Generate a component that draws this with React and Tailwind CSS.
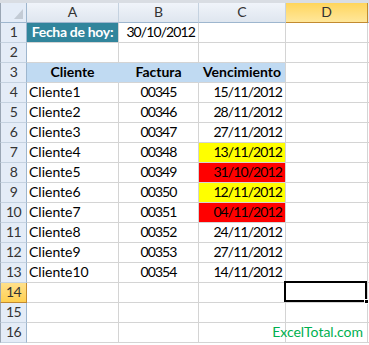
import React from 'react';

const rows = [
  { n: 4, a: 'Cliente1', b: '00345', c: '15/11/2012' },
  { n: 5, a: 'Cliente2', b: '00346', c: '28/11/2012' },
  { n: 6, a: 'Cliente3', b: '00347', c: '27/11/2012' },
  { n: 7, a: 'Cliente4', b: '00348', c: '13/11/2012', fill: 'bg-[#ffff00]' },
  { n: 8, a: 'Cliente5', b: '00349', c: '31/10/2012', fill: 'bg-[#ff0000]' },
  { n: 9, a: 'Cliente6', b: '00350', c: '12/11/2012', fill: 'bg-[#ffff00]' },
  { n: 10, a: 'Cliente7', b: '00351', c: '04/11/2012', fill: 'bg-[#ff0000]' },
  { n: 11, a: 'Cliente8', b: '00352', c: '24/11/2012' },
  { n: 12, a: 'Cliente9', b: '00353', c: '27/11/2012' },
  { n: 13, a: 'Cliente10', b: '00354', c: '14/11/2012' },
];

const cell = 'h-5 border-r border-b border-[#d4d4d4] flex items-end pb-[1px] leading-[18px] whitespace-nowrap';
const num = 'tracking-[-0.9px]';

function RowHead({ n, active }) {
  return (
    <div
      className={`h-5 flex items-end justify-center pb-[1px] leading-[18px] border-r border-b border-l tracking-[-0.5px] ${
        active
          ? 'bg-gradient-to-b from-[#ffe08a] to-[#ffd04f] border-r-[#c28a30] border-b-[#c28a30] border-l-[#9aa6b4] text-[#333]'
          : 'bg-[#e4ecf7] border-r-[#9eb6ce] border-b-[#c5d2e0] border-l-[#9aa6b4] text-[#333]'
      }`}
    >
      {n}
    </div>
  );
}

function ColHead({ label, active }) {
  return (
    <div
      className={`h-5 flex items-end justify-center pb-[1px] leading-[18px] border-r border-b ${
        active
          ? 'bg-gradient-to-b from-[#ffd55a] to-[#ffe79a] border-[#c28a30] text-[#333]'
          : 'bg-gradient-to-b from-[#f0f4fa] to-[#dfe6ef] border-r-[#c5d2e0] border-b-[#9eb6ce] text-[#333]'
      }`}
    >
      {label}
    </div>
  );
}

export default function App() {
  return (
    <div className="w-[369px] h-[345px] bg-white overflow-hidden text-[14px] text-black" style={{ fontFamily: 'Lato, "Liberation Sans", sans-serif' }}>
      <div className="h-[3px] bg-[#d9dde3]" />
      <div className="grid grid-cols-[27px_92px_80px_87px_82px_1fr]">
        {/* column headers */}
        <div className="h-5 bg-[#e4ecf7] border-r border-b border-l border-r-[#9eb6ce] border-b-[#9eb6ce] border-l-[#9aa6b4] relative">
          <svg className="absolute right-[3px] bottom-[3px]" width="9" height="10" viewBox="0 0 9 10">
            <polygon points="9,0 9,10 0,10" fill="#c3cbd5" />
          </svg>
        </div>
        <ColHead label="A" />
        <ColHead label="B" />
        <ColHead label="C" />
        <ColHead label="D" active />
        <div className="h-5 bg-[#dfe6ef] border-b border-[#9eb6ce]" />

        {/* row 1 */}
        <RowHead n={1} />
        <div className={`${cell} justify-center bg-[#31859c] text-white font-bold tracking-[-0.3px]`}>Fecha de hoy:</div>
        <div className={`${cell} justify-end pr-[3px] ${num}`}>30/10/2012</div>
        <div className={cell} />
        <div className={cell} />
        <div className="h-5 border-b border-[#d4d4d4]" />

        {/* row 2 */}
        <RowHead n={2} />
        <div className={cell} />
        <div className={cell} />
        <div className={cell} />
        <div className={cell} />
        <div className="h-5 border-b border-[#d4d4d4]" />

        {/* row 3 */}
        <RowHead n={3} />
        <div className={`${cell} justify-center bg-[#c0daf2] font-bold border-r-[#c0daf2]`}>Cliente</div>
        <div className={`${cell} justify-center bg-[#c0daf2] font-bold border-r-[#c0daf2]`}>Factura</div>
        <div className={`${cell} justify-center bg-[#c0daf2] font-bold`}>Vencimiento</div>
        <div className={cell} />
        <div className="h-5 border-b border-[#d4d4d4]" />

        {rows.map((r) => (
          <React.Fragment key={r.n}>
            <RowHead n={r.n} />
            <div className={`${cell} pl-[2px]`}>{r.a}</div>
            <div className={`${cell} justify-center ${num}`}>{r.b}</div>
            <div className={`${cell} justify-end pr-[3px] ${num} ${r.fill || ''}`}>{r.c}</div>
            <div className={cell} />
            <div className="h-5 border-b border-[#d4d4d4]" />
          </React.Fragment>
        ))}

        {/* row 14 - selected */}
        <RowHead n={14} active />
        <div className={cell} />
        <div className={cell} />
        <div className={cell} />
        <div className={`${cell} relative`}>
          <div className="absolute -left-[2px] -top-[2px] right-0 bottom-0 border-2 border-black" />
          <div className="absolute -right-[2px] -bottom-[2px] w-[5px] h-[5px] bg-black border border-white" />
        </div>
        <div className="h-5 border-b border-[#d4d4d4]" />

        {/* row 15 */}
        <RowHead n={15} />
        <div className={cell} />
        <div className={cell} />
        <div className={cell} />
        <div className={cell} />
        <div className="h-5 border-b border-[#d4d4d4]" />

        {/* row 16 */}
        <RowHead n={16} />
        <div className={cell} />
        <div className={cell} />
        <div className={cell} />
        <div className={`${cell} justify-end pr-[4px] text-[#00b050] overflow-visible`}>ExcelTotal.com</div>
        <div className="h-5 border-b border-[#d4d4d4]" />
      </div>
    </div>
  );
}
